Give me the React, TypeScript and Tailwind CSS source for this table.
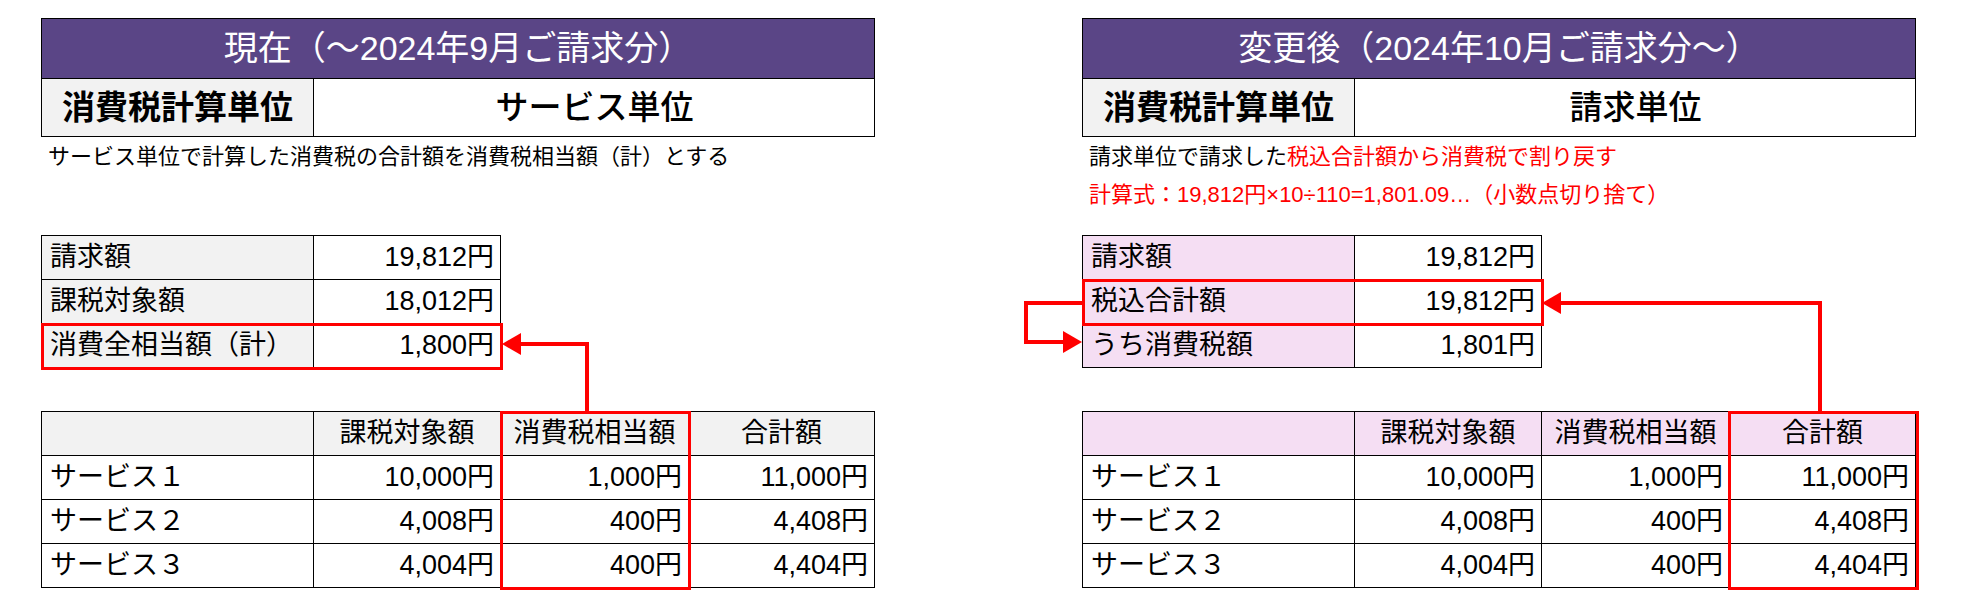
import type React from "react"

const services = [
  { name: "サービス１", base: "10,000円", tax: "1,000円", total: "11,000円" },
  { name: "サービス２", base: "4,008円", tax: "400円", total: "4,408円" },
  { name: "サービス３", base: "4,004円", tax: "400円", total: "4,404円" },
]

type SectionProps = {
  title: string
  unit: string
  notes: React.ReactNode
  tint: string
  summary: { label: string; value: string }[]
  summaryBox: string
  columnBox: string
}

const Section: React.FC<SectionProps> = ({ title, unit, notes, tint, summary, summaryBox, columnBox }) => {
  return (
    <div className="w-[834px] flex flex-col">
      {/* header block */}
      <div className="border-l border-t border-r border-black">
        <div className="h-[60px] bg-[#5a4586] border-b border-black flex items-center justify-center text-white text-[34px]">
          {title}
        </div>
        <div className="grid grid-cols-[272px_561px] h-[58px] border-b border-black">
          <div className="bg-[#f2f2f2] border-r border-black flex items-center justify-center text-[33px] font-bold">
            消費税計算単位
          </div>
          <div className="flex items-center justify-center text-[33px] font-medium">{unit}</div>
        </div>
      </div>

      {/* notes */}
      <div className="h-[98px] pt-[1px] pl-[7px] text-[22px] leading-[38px]">{notes}</div>

      {/* summary */}
      <div className="relative w-[460px] border-l border-t border-black grid grid-cols-[272px_187px]">
        {summary.map((row) => (
          <div key={row.label} className="contents">
            <div className={`h-[44px] border-r border-b border-black flex items-center pl-[8px] text-[27px] ${tint}`}>
              {row.label}
            </div>
            <div className="h-[44px] border-r border-b border-black flex items-center justify-end pr-[6px] text-[27px]">
              {row.value}
            </div>
          </div>
        ))}
        <div className={`absolute border-[3px] border-[#ff0000] ${summaryBox}`} />
      </div>

      {/* services */}
      <div className="relative mt-[43px] border-l border-t border-black grid grid-cols-[272px_187px_188px_186px]">
        <div className={`h-[44px] border-r border-b border-black ${tint}`} />
        {["課税対象額", "消費税相当額", "合計額"].map((h) => (
          <div
            key={h}
            className={`h-[44px] border-r border-b border-black flex items-center justify-center text-[27px] ${tint}`}
          >
            {h}
          </div>
        ))}
        {services.map((s) => (
          <div key={s.name} className="contents">
            <div className="h-[44px] border-r border-b border-black flex items-center pl-[8px] text-[27px]">{s.name}</div>
            <div className="h-[44px] border-r border-b border-black flex items-center justify-end pr-[6px] text-[27px]">{s.base}</div>
            <div className="h-[44px] border-r border-b border-black flex items-center justify-end pr-[6px] text-[27px]">{s.tax}</div>
            <div className="h-[44px] border-r border-b border-black flex items-center justify-end pr-[6px] text-[27px]">{s.total}</div>
          </div>
        ))}
        <div className={`absolute border-[3px] border-[#ff0000] ${columnBox}`} />
      </div>
    </div>
  )
}

const Arrows: React.FC = () => (
  <svg className="absolute inset-0 pointer-events-none" width="1969" height="608" viewBox="0 0 1969 608">
    <g stroke="#ff0000" strokeWidth="4" fill="none">
      <polyline points="587,411 587,344 519,344" />
      <polyline points="1820,411 1820,303 1559,303" />
      <polyline points="1083,303 1026,303 1026,342 1065,342" />
    </g>
    <g fill="#ff0000">
      <polygon points="502,344 521,333 521,355" />
      <polygon points="1542,303 1561,292 1561,314" />
      <polygon points="1082,342 1063,331 1063,353" />
    </g>
  </svg>
)

export default function App() {
  return (
    <div className="relative w-[1969px] h-[608px] bg-white text-black overflow-hidden [font-family:'Liberation_Sans','Noto_Sans_CJK_JP',sans-serif]">
      <div className="flex pt-[18px] pl-[41px] gap-[207px]">
        <Section
          title="現在（～2024年9月ご請求分）"
          unit="サービス単位"
          tint="bg-[#f2f2f2]"
          notes={<p>サービス単位で計算した消費税の合計額を消費税相当額（計）とする</p>}
          summary={[
            { label: "請求額", value: "19,812円" },
            { label: "課税対象額", value: "18,012円" },
            { label: "消費全相当額（計）", value: "1,800円" },
          ]}
          summaryBox="-left-[1px] top-[87px] w-[462px] h-[47px]"
          columnBox="left-[458px] -top-[1px] w-[191px] h-[179px]"
        />
        <Section
          title="変更後（2024年10月ご請求分～）"
          unit="請求単位"
          tint="bg-[#f5def3]"
          notes={
            <>
              <p>
                請求単位で請求した<span className="text-[#ff0000]">税込合計額から消費税で割り戻す</span>
              </p>
              <p className="text-[#ff0000]">計算式：19,812円×10÷110=1,801.09…（小数点切り捨て）</p>
            </>
          }
          summary={[
            { label: "請求額", value: "19,812円" },
            { label: "税込合計額", value: "19,812円" },
            { label: "うち消費税額", value: "1,801円" },
          ]}
          summaryBox="-left-[1px] top-[43px] w-[462px] h-[47px]"
          columnBox="left-[645px] -top-[1px] w-[191px] h-[179px]"
        />
      </div>
      <Arrows />
    </div>
  )
}
